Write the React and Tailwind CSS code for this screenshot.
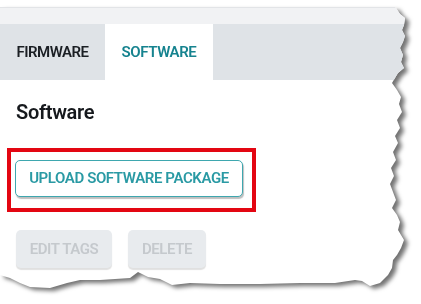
export default function App() {
  return (
    <div className="w-[421px] h-[304px] bg-white overflow-hidden font-['Roboto',sans-serif]">
      <div className="pt-[7px] [filter:drop-shadow(4px_3px_2px_rgba(0,0,0,0.55))]">
        <div className="w-[421px] h-[290px] bg-white flex flex-col [clip-path:polygon(0_0,383px_0,390px_-4px,396px_1px,400px_7px,405px_11px,404px_18px,402px_23px,405px_29px,403px_35px,400px_41px,403px_48px,401px_55px,404px_61px,398px_66px,395px_71px,392px_76px,397px_83px,401px_90px,399px_97px,402px_105px,397px_113px,400px_121px,395px_129px,398px_136px,393px_145px,396px_153px,391px_161px,394px_169px,390px_177px,393px_185px,396px_193px,392px_201px,397px_208px,400px_215px,398px_223px,404px_233px,401px_241px,397px_248px,393px_253px,392px_261px,388px_268px,380px_276px,370px_279px,362px_274px,355px_273px,335px_276px,300px_276px,260px_277px,220px_277px,190px_276px,172px_278px,160px_272px,148px_270px,138px_265px,130px_271px,100px_273px,80px_273px,67px_276px,50px_281px,30px_280px,20px_276px,10px_271px,0_268px)]">
          <div className="h-px bg-[#e2e4e7]" />
          <div className="h-[16px] bg-[#f1f2f4]" />
          <div className="flex h-[56px] bg-[#dfe3e7]">
            <div className="w-[105px] flex items-center justify-center text-[15px] font-semibold text-[#1b1f24] tracking-[-0.5px]">
              FIRMWARE
            </div>
            <div className="w-[108px] bg-white flex items-center justify-center text-[15px] font-semibold text-[#16838f] tracking-[-0.4px]">
              SOFTWARE
            </div>
          </div>
          <div className="pl-[16px] pt-[20px] text-[20px] font-semibold text-[#16191d] leading-[24px] tracking-[-0.3px]">
            Software
          </div>
          <div className="mt-[24px] ml-[7px] w-[249px] h-[64px] border-4 border-[#e30612] pl-[4px] pt-[8px]">
            <div className="w-[228px] h-[37px] rounded-[5px] border border-[#3ea7af] bg-white shadow-[1px_2px_1px_rgba(0,0,0,0.25)] flex items-center justify-center text-[15px] font-semibold text-[#2a9aa4] tracking-[-0.4px]">
              UPLOAD SOFTWARE PACKAGE
            </div>
          </div>
          <div className="mt-[18px] ml-[16px] flex gap-[16px]">
            <div className="w-[96px] h-[38px] rounded-[5px] bg-[#e8ebee] shadow-[0_2px_1px_rgba(0,0,0,0.12)] flex items-center justify-center text-[15px] font-semibold text-[#c5c9cd] tracking-[-0.4px]">
              EDIT TAGS
            </div>
            <div className="w-[78px] h-[38px] rounded-[5px] bg-[#e8ebee] shadow-[0_2px_1px_rgba(0,0,0,0.12)] flex items-center justify-center text-[15px] font-semibold text-[#c5c9cd] tracking-[-0.4px]">
              DELETE
            </div>
          </div>
        </div>
      </div>
    </div>
  );
}
